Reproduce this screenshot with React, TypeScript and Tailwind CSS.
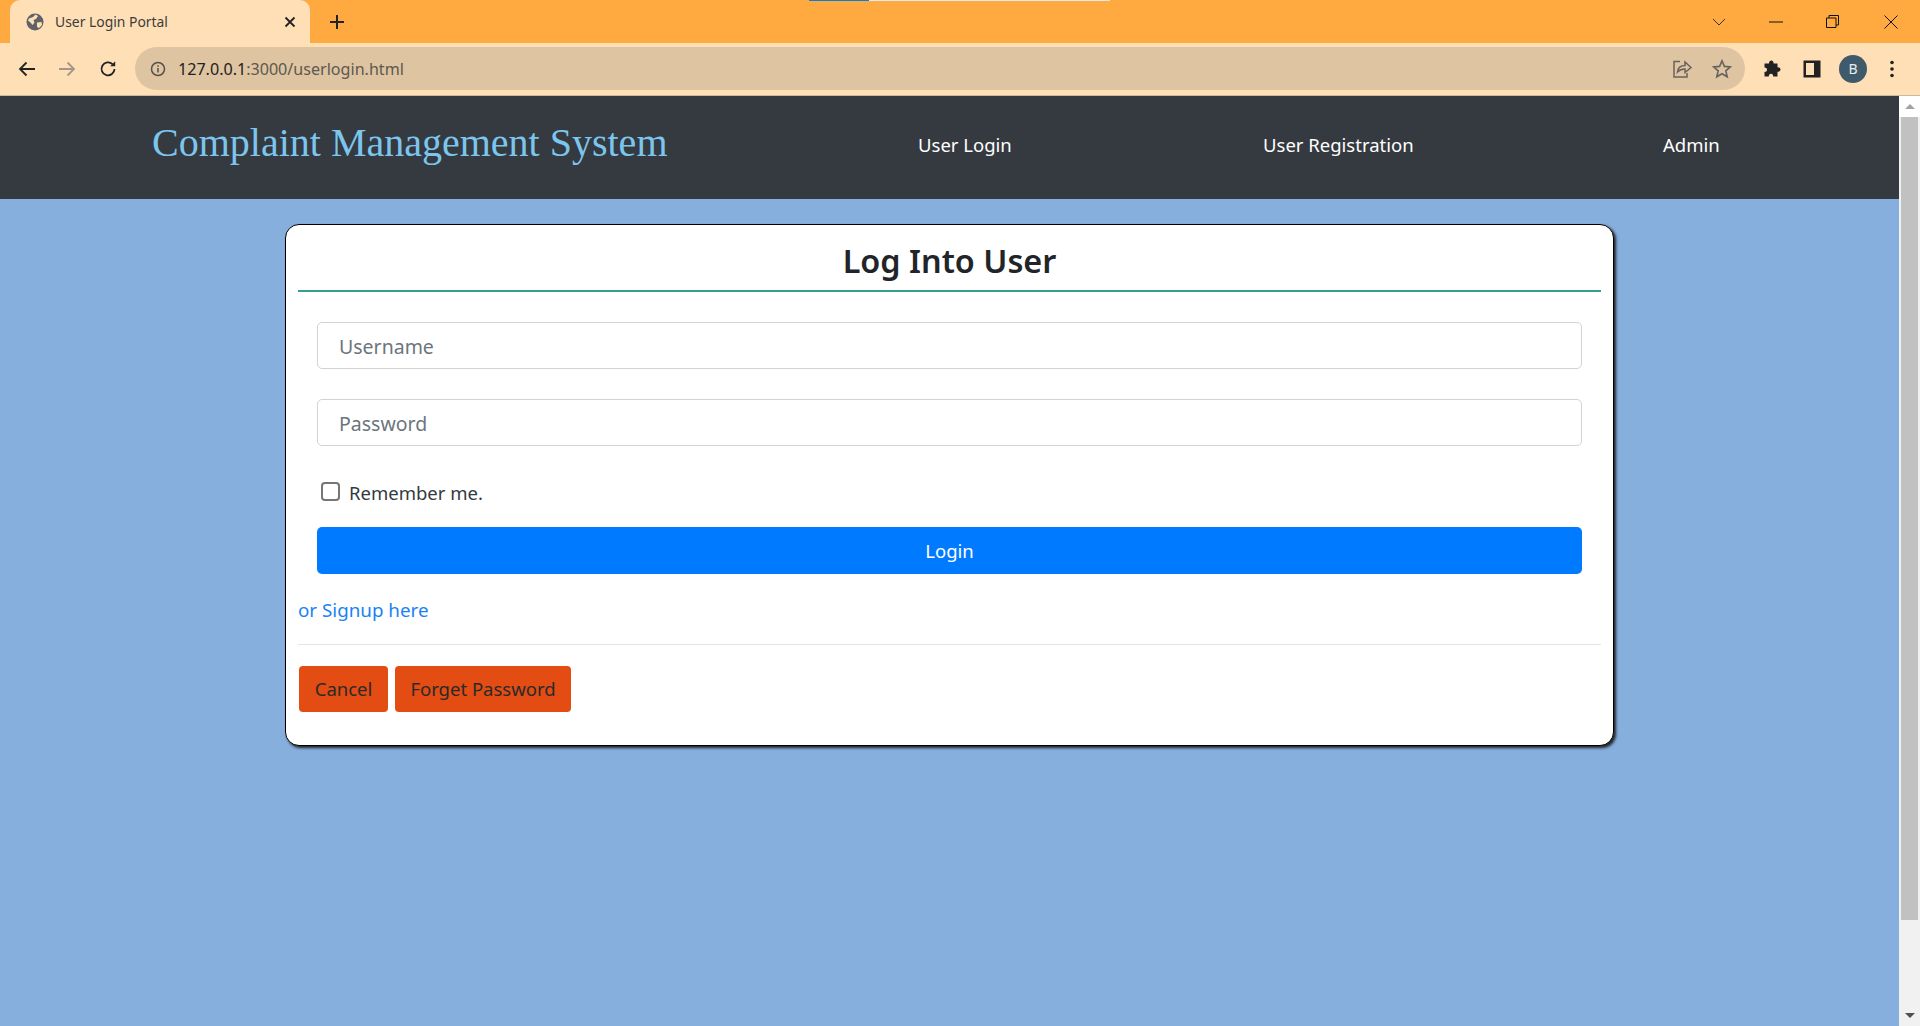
import React from "react";

const Tab = () => (
  <div className="ml-[10px] flex h-[43px] w-[300px] items-center rounded-t-[10px] bg-[#ffdfb5] pl-[16px] pr-[12px]">
    <svg width="18" height="18" viewBox="0 0 18 18" className="shrink-0">
      <circle cx="9" cy="9" r="8.5" fill="#5f6368" />
      <path d="M3 5.5 L7 4 L9.5 1.5 L12 3 L10 6 L7.5 7 L8.5 9.5 L6.5 12 L4.5 9.5 L2 7.5Z M11 9.5 L15.5 9 L16 12 L13 15 L11 14Z" fill="#ffdfb5" />
    </svg>
    <span className="ml-[11px] flex-1 text-[13.9px] leading-none text-[#3c3c3c]">User Login Portal</span>
    <svg width="12" height="12" viewBox="0 0 12 12" fill="none" stroke="#222" strokeWidth="1.8" className="mr-[2px]">
      <path d="M1.5 1.5 L10.5 10.5 M10.5 1.5 L1.5 10.5" />
    </svg>
  </div>
);

export default function App() {
  return (
    <div className="flex h-[1026px] w-[1920px] flex-col overflow-hidden bg-[#86afde] [font-family:'Noto_Sans',sans-serif]">
      {/* tab strip */}
      <div className="relative flex h-[43px] shrink-0 items-center bg-[#ffaa40]">
        <Tab />
        <svg width="16" height="16" viewBox="0 0 16 16" className="ml-[19px]" stroke="#222" strokeWidth="2">
          <path d="M8 1 V15 M1 8 H15" />
        </svg>
        <div className="absolute left-[809px] top-0 h-px w-[60px] bg-[#0a7fd6]" />
        <div className="absolute left-[869px] top-0 h-px w-[241px] bg-[#e8e8e8]" />
        <div className="ml-auto flex items-center">
          <svg width="14" height="8" viewBox="0 0 14 8" fill="none" stroke="#333" strokeWidth="1" className="mr-[43px]">
            <path d="M1 1 L7 7 L13 1" />
          </svg>
          <svg width="14" height="2" viewBox="0 0 14 2" stroke="#111" strokeWidth="1" className="mr-[43px]">
            <path d="M0 1 H14" />
          </svg>
          <svg width="13" height="13" viewBox="0 0 13 13" fill="none" stroke="#111" strokeWidth="1" className="mr-[45px]">
            <path d="M0.5 3 H10 V12.5 H0.5Z M3 3 V0.5 H12.5 V10 H10" />
          </svg>
          <svg width="14" height="14" viewBox="0 0 14 14" fill="none" stroke="#111" strokeWidth="1" className="mr-[22px]">
            <path d="M0.5 0.5 L13.5 13.5 M13.5 0.5 L0.5 13.5" />
          </svg>
        </div>
      </div>
      {/* toolbar */}
      <div className="flex h-[53px] shrink-0 items-center border-b border-[#c9b9a5] bg-[#ffdfb5] pb-[1px]">
        <svg width="18" height="18" viewBox="0 0 18 18" fill="none" stroke="#222" strokeWidth="1.8" className="ml-[18px]">
          <path d="M17 9 H2 M8.5 2.5 L2 9 L8.5 15.5" />
        </svg>
        <svg width="18" height="18" viewBox="0 0 18 18" fill="none" stroke="#a3968a" strokeWidth="1.8" className="ml-[22px]">
          <path d="M1 9 H16 M9.5 2.5 L16 9 L9.5 15.5" />
        </svg>
        <svg width="18" height="18" viewBox="0 0 18 18" fill="none" stroke="#222" strokeWidth="1.8" className="ml-[23px]">
          <path d="M15.5 9 A6.5 6.5 0 1 1 13.5 4.2" />
          <path d="M16.2 1.2 V6.2 H11.2Z" fill="#222" stroke="none" />
        </svg>
        <div className="ml-[18px] flex h-[43px] w-[1610px] items-center rounded-full bg-[#dec4a1] pl-[15px]">
          <svg width="16" height="16" viewBox="0 0 16 16" fill="none" stroke="#55514c" strokeWidth="1.5">
            <circle cx="8" cy="8" r="6.5" />
            <path d="M8 7 V11.5 M8 4.2 V5.8" />
          </svg>
          <span className="ml-[12px] pt-[1px] text-[16.1px] text-[#222]">127.0.0.1<span className="text-[#5d5850]">:3000/userlogin.html</span></span>
          <svg width="20" height="20" viewBox="0 0 20 20" fill="none" stroke="#66635f" strokeWidth="1.5" className="ml-auto mr-[20px]">
            <path d="M8 2.5 H2 V18 H15 V14" />
            <path d="M5.5 13 C6 9 9 6.5 13 6.5 V3 L19 8.5 L13 13.5 V10 C10 10 7.5 11 5.5 13Z" />
          </svg>
          <svg width="20" height="20" viewBox="0 0 20 20" fill="none" stroke="#66635f" strokeWidth="1.6" className="mr-[13px]">
            <path d="M10 1.8 L12.4 7.4 L18.4 7.9 L13.8 11.9 L15.2 17.8 L10 14.7 L4.8 17.8 L6.2 11.9 L1.6 7.9 L7.6 7.4Z" />
          </svg>
        </div>
        <svg width="18" height="18" viewBox="0 0 18 18" fill="#222" className="ml-[18px]">
          <path d="M6 3.5 C6 1.5 7 0.5 8.3 0.5 C9.6 0.5 10.6 1.5 10.6 3.5 H14.5 V7.2 C16.5 7.2 17.5 8.2 17.5 9.5 C17.5 10.8 16.5 11.8 14.5 11.8 V16.5 H10.2 C10.2 14.8 9.5 13.8 8 13.8 C6.5 13.8 5.8 14.8 5.8 16.5 H1.5 V12 C3 12 4 11 4 9.7 C4 8.4 3 7.5 1.5 7.5 V3.5Z" />
        </svg>
        <svg width="18" height="18" viewBox="0 0 18 18" className="ml-[22px]">
          <path fillRule="evenodd" d="M0.5 0.5 H17.5 V17.5 H0.5Z M3 3 V15 H11 V3Z" fill="#222" />
        </svg>
        <div className="ml-[18px] flex h-[28px] w-[28px] items-center justify-center rounded-full bg-[#3f5a6a] text-[14px] text-[#e8eef2]">B</div>
        <svg width="4" height="18" viewBox="0 0 4 18" fill="#222" className="ml-[23px]">
          <circle cx="2" cy="2.5" r="1.8" />
          <circle cx="2" cy="9" r="1.8" />
          <circle cx="2" cy="15.5" r="1.8" />
        </svg>
      </div>
      {/* page */}
      <div className="flex min-h-0 flex-1">
        <main className="flex min-w-0 flex-1 flex-col">
          <nav className="flex h-[103px] shrink-0 items-center bg-[#343a40] pl-[152px]">
            <span className="mb-[10px] w-[766px] text-[40px] leading-none text-[#7cc6ee] [font-family:'Liberation_Serif',serif]">Complaint Management System</span>
            <span className="mb-[5px] w-[345px] text-[18.5px] text-white">User Login</span>
            <span className="mb-[5px] w-[400px] text-[18.5px] text-white">User Registration</span>
            <span className="mb-[5px] text-[18.5px] text-white">Admin</span>
          </nav>
          <section className="mx-auto mt-[25px] h-[522px] w-[1329px] rounded-[14px] border border-black bg-white px-[12px] shadow-[2px_2px_3px_#222]">
            <h1 className="h-[67px] border-b-2 border-[#369e90] pt-[13px] text-center text-[32.4px] leading-[44px] font-semibold text-[#212529]">Log Into User</h1>
            <div className="flex flex-col px-[19px] pt-[30px]">
              <div className="flex h-[47px] items-center rounded-[5px] border border-[#ced4da] pt-[2px] pl-[21px] text-[19.5px] text-[#6c757d]">Username</div>
              <div className="mt-[30px] flex h-[47px] items-center rounded-[5px] border border-[#ced4da] pt-[2px] pl-[21px] text-[19.5px] text-[#6c757d]">Password</div>
              <div className="mt-[35px] flex h-[20px] items-center">
                <div className="ml-[4px] h-[19px] w-[19px] rounded-[4px] border-2 border-[#767676] bg-white" />
                <span className="ml-[9px] mt-[4px] text-[18.5px] leading-none text-[#343a40]">Remember me.</span>
              </div>
              <div className="mt-[26px] flex h-[47px] items-center justify-center rounded-[5px] bg-[#007bff] text-[18.5px] text-white">Login</div>
            </div>
            <div className="mt-[23px] text-[18.8px] leading-[26px] text-[#1a82f5]">or Signup here</div>
            <div className="mt-[21px] h-px bg-[#e2e4e6]" />
            <div className="mt-[21px] flex gap-[7px] pl-[1px]">
              <div className="flex h-[46px] w-[89px] items-center justify-center rounded-[4px] bg-[#e34c12] text-[18.5px] text-[#2a2a2a]">Cancel</div>
              <div className="flex h-[46px] w-[176px] items-center justify-center rounded-[4px] bg-[#e34c12] text-[18.5px] text-[#2a2a2a]">Forget Password</div>
            </div>
          </section>
        </main>
        {/* scrollbar */}
        <aside className="flex w-[21px] shrink-0 flex-col bg-[#f1f1f1]">
          <div className="flex h-[21px] items-center justify-center bg-white">
            <div className="h-0 w-0 border-x-[5px] border-b-[5px] border-x-transparent border-b-[#a3a3a3]" />
          </div>
          <div className="ml-[2px] h-[803px] w-[17px] bg-[#c1c1c1]" />
          <div className="mt-auto flex h-[21px] items-center justify-center">
            <div className="h-0 w-0 border-x-[5px] border-t-[5px] border-x-transparent border-t-[#505050]" />
          </div>
        </aside>
      </div>
    </div>
  );
}
